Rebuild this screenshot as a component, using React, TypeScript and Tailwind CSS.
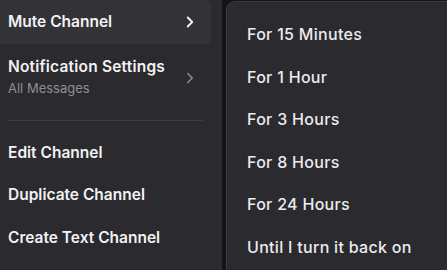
import { ChevronRight } from 'lucide-react'

const leftItems = ['Edit Channel', 'Duplicate Channel', 'Create Text Channel']
const muteOptions = ['For 15 Minutes', 'For 1 Hour', 'For 3 Hours', 'For 8 Hours', 'For 24 Hours', 'Until I turn it back on']

export default function App() {
  return (
    <div className="flex h-[270px] w-[447px] overflow-hidden bg-[#141417] font-['Inter',sans-serif]">
      {/* channel context menu */}
      <div className="flex w-[222px] shrink-0 flex-col bg-[#2a2a2f] pr-[11px]">
        <div className="flex h-[44px] items-center justify-between rounded-r-[6px] bg-[#323237] pl-2 pr-[14px] text-[15.5px] font-semibold text-[#f2f2f4]">
          <span>Mute Channel</span>
          <ChevronRight size={18} strokeWidth={2.5} className="-mr-[2px]" />
        </div>
        <div className="flex h-[66px] items-center justify-between pl-2 pr-[14px]">
          <div className="flex flex-col">
            <span className="text-[15.5px] font-semibold leading-[22px] tracking-[0.2px] text-[#f2f2f4]">Notification Settings</span>
            <span className="text-[13px] leading-[20px] text-[#8e8e96]">All Messages</span>
          </div>
          <ChevronRight size={18} strokeWidth={2} className="-mr-[2px] mt-[1px] text-[#8e8e96]" />
        </div>
        <div className="mx-2 mt-[10px] h-px bg-[#3b3b41]" />
        <div className="flex flex-col pt-[10px]">
          {leftItems.map((item) => (
            <div key={item} className="flex h-[42.5px] items-center pl-2 text-[15.5px] font-semibold text-[#f2f2f4]">
              {item}
            </div>
          ))}
        </div>
      </div>

      {/* mute submenu */}
      <div className="ml-[4px] mt-px flex flex-1 flex-col rounded-tl-[9px] border-l border-t border-[#3a3a40] bg-[#2a2a2f] pl-5 pt-[11px]">
        {muteOptions.map((opt) => (
          <div key={opt} className="flex h-[42.5px] items-center text-[16px] font-medium tracking-[0.3px] text-[#ececee]">
            {opt}
          </div>
        ))}
      </div>
    </div>
  )
}
